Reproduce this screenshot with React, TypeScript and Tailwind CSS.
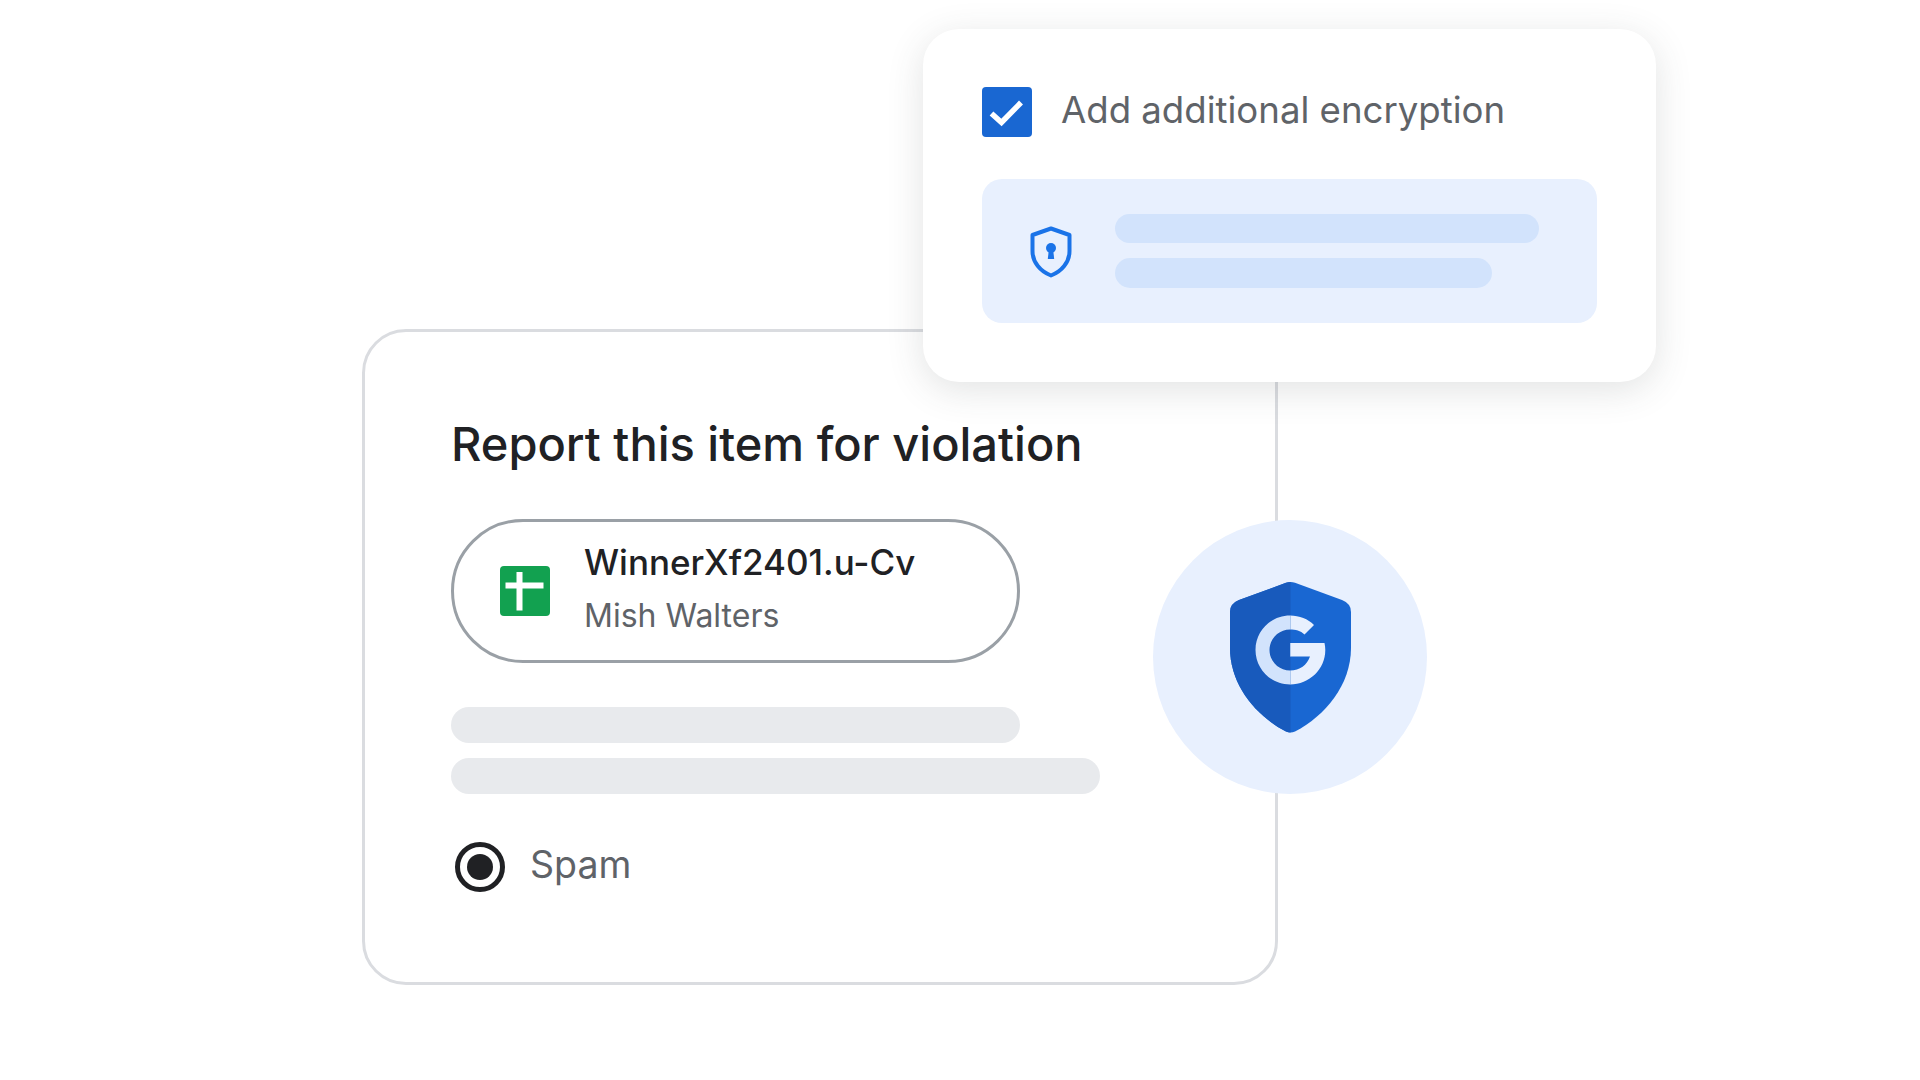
const FONT = "font-['Inter','Roboto',sans-serif]";

function CheckBox() {
  return (
    <div className="flex h-[50px] w-[50px] shrink-0 items-center justify-center rounded-[4px] bg-[#1967d2]">
      <svg width="50" height="50" viewBox="0 0 50 50" fill="none">
        <path d="M9.5 26.5 L19.5 35.5 L39 15.5" stroke="#fff" strokeWidth="5.5" />
      </svg>
    </div>
  );
}

function LockShield() {
  return (
    <svg width="44" height="52" viewBox="0 0 44 52" fill="none" className="mt-[2px] shrink-0">
      <path d="M22 2.5 L40.5 9 V25 C40.5 36.5 32.5 45.5 22 49.5 C11.5 45.5 3.5 36.5 3.5 25 V9 Z" stroke="#1a73e8" strokeWidth="4" strokeLinejoin="round" />
      <circle cx="22" cy="22" r="5" fill="#1a73e8" />
      <path d="M19.8 24 H24.2 L25.2 33 H18.8 Z" fill="#1a73e8" />
    </svg>
  );
}

function SheetIcon() {
  return (
    <div className="relative h-[50px] w-[50px] shrink-0 rounded-[4px] bg-[#12a150]">
      <svg width="50" height="50" viewBox="0 0 50 50">
        <rect x="5.5" y="16.5" width="38" height="6" fill="#fff" />
        <rect x="16.5" y="6" width="6" height="38.5" fill="#fff" />
      </svg>
    </div>
  );
}

const G_PATH =
  "M60 61 H94.5 C95 63.5 95.3 65.5 95.3 68 C95.3 87 79.5 102.5 60 102.5 C41 102.5 25.5 87 25.5 68 C25.5 49 41 33.5 60 33.5 C69.5 33.5 78 37 84 43 L74.5 52.5 C70.5 48.5 65.5 47.5 60 47.5 C48.7 47.5 39.5 56.7 39.5 68 C39.5 79.3 48.7 88.5 60 88.5 C70 88.5 77 83 80 74.5 H60 Z";

function GoogleShield() {
  return (
    <svg width="121" height="151" viewBox="0 0 121 151">
      <defs>
        <clipPath id="leftHalf"><rect x="0" y="0" width="60.5" height="151" /></clipPath>
        <clipPath id="rightHalf"><rect x="60.5" y="0" width="60.5" height="151" /></clipPath>
      </defs>
      <path
        d="M56 0.8 Q60.5 -0.6 65 0.8 L112 18 Q121 21.5 121 30 V66 C121 103 95 134 65 149.5 Q60.5 151.6 56 149.5 C26 134 0 103 0 66 V30 Q0 21.5 9 18 Z"
        fill="#1967d2"
      />
      <path
        d="M56 0.8 Q60.5 -0.6 65 0.8 L112 18 Q121 21.5 121 30 V66 C121 103 95 134 65 149.5 Q60.5 151.6 56 149.5 C26 134 0 103 0 66 V30 Q0 21.5 9 18 Z"
        fill="#185abc"
        clipPath="url(#leftHalf)"
      />
      <path d={G_PATH} fill="#d2e3fc" clipPath="url(#leftHalf)" />
      <path d={G_PATH} fill="#e8f0fe" clipPath="url(#rightHalf)" />
    </svg>
  );
}

export default function App() {
  return (
    <div className={`h-screen w-full overflow-hidden bg-white pl-[362px] pt-[329px] ${FONT}`}>
      <div className="relative h-[656px] w-[916px]">
        {/* Report card */}
        <div className="h-full w-full rounded-[44px] border-[3px] border-[#dadce0] bg-white pl-[86px] pt-[84px]">
          <h1 className="text-[47px] font-medium leading-[56px] text-[#202124]">Report this item for violation</h1>

          <div className="mt-[47px] flex h-[144px] w-[569px] items-center gap-[34px] rounded-full border-[3px] border-[#9aa0a6] pl-[46px]">
            <SheetIcon />
            <div className="-mt-[5px]">
              <p className="-mt-[1px] text-[35px] font-medium leading-[44px] text-[#202124]">WinnerXf2401.u-Cv</p>
              <p className="mt-[12px] text-[32px] leading-[40px] text-[#5f6368]">Mish Walters</p>
            </div>
          </div>

          <div className="mt-[44px] h-[36px] w-[569px] rounded-full bg-[#e8eaed]" />
          <div className="mt-[15px] h-[36px] w-[649px] rounded-full bg-[#e8eaed]" />

          <div className="mt-[48px] flex items-center gap-[25px] pl-[4px]">
            <div className="flex h-[50px] w-[50px] items-center justify-center rounded-full border-[5px] border-[#202124]">
              <div className="h-[26px] w-[26px] rounded-full bg-[#202124]" />
            </div>
            <span className="-mt-[4px] text-[37.5px] leading-[48px] text-[#5f6368]">Spam</span>
          </div>
        </div>

        {/* Encryption card */}
        <div className="absolute left-[561px] top-[-300px] h-[353px] w-[733px] rounded-[36px] bg-white pl-[59px] pt-[58px] shadow-[0_8px_36px_rgba(60,64,67,0.15)]">
          <div className="flex items-center gap-[29px]">
            <CheckBox />
            <span className="-mt-[4px] text-[36.6px] leading-[44px] text-[#5f6368]">Add additional encryption</span>
          </div>
          <div className="mt-[42px] flex h-[144px] w-[615px] items-center gap-[42px] rounded-[20px] bg-[#e8f0fe] pl-[47px]">
            <LockShield />
            <div className="flex flex-col gap-[15px]">
              <div className="h-[29px] w-[424px] rounded-full bg-[#d2e3fc]" />
              <div className="h-[30px] w-[377px] rounded-full bg-[#d2e3fc]" />
            </div>
          </div>
        </div>

        {/* Shield badge */}
        <div className="absolute left-[791px] top-[191px] flex h-[274px] w-[274px] items-center justify-center rounded-full bg-[#e8f0fe]">
          <GoogleShield />
        </div>
      </div>
    </div>
  );
}
